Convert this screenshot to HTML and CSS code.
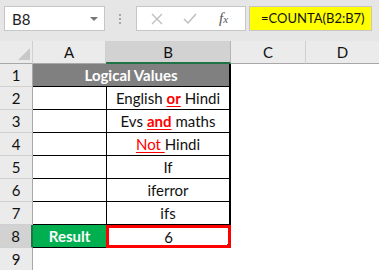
FILE: index.html
```html
<!DOCTYPE html>
<html lang="en">
<head>
  <meta charset="UTF-8" />
  <title>COUNTA</title>
  <link rel="stylesheet" href="styles.css">
</head>
<body>
  <div class="toolbar">
    <div class="name-box">
      <span>B8</span>
      <span class="drop"></span>
    </div>
    <div class="dots"><i></i><i></i><i></i></div>
    <div class="fx-box">
      <svg width="12" height="12" viewBox="0 0 12 12"><path d="M1 1 L11 11 M11 1 L1 11" stroke="#bdbdbd" stroke-width="1.3" fill="none"/></svg>
      <svg width="14" height="12" viewBox="0 0 14 12"><path d="M1 6 L5 10 L13 1" stroke="#bdbdbd" stroke-width="1.5" fill="none"/></svg>
      <span class="fx"><i>f</i><small>x</small></span>
    </div>
    <div class="formula">=COUNTA(B2:B7)</div>
  </div>

  <div class="sheet">
    <div class="corner"><span class="tri"></span></div>
    <div class="col-head">A</div>
    <div class="col-head sel">B</div>
    <div class="col-head">C</div>
    <div class="col-head last">D</div>

    <div class="row-head">1</div>
    <div class="title">Logical Values</div>
    <div class="blank"></div>
    <div class="blank"></div>

    <div class="row-head">2</div>
    <div class="a-cell"></div>
    <div class="b-cell">English <b class="red">or</b> Hindi</div>
    <div class="blank"></div>
    <div class="blank"></div>

    <div class="row-head">3</div>
    <div class="a-cell"></div>
    <div class="b-cell">Evs <b class="red">and</b> maths</div>
    <div class="blank"></div>
    <div class="blank"></div>

    <div class="row-head">4</div>
    <div class="a-cell"></div>
    <div class="b-cell"><span class="red">Not&nbsp;</span>Hindi</div>
    <div class="blank"></div>
    <div class="blank"></div>

    <div class="row-head">5</div>
    <div class="a-cell"></div>
    <div class="b-cell">If</div>
    <div class="blank"></div>
    <div class="blank"></div>

    <div class="row-head">6</div>
    <div class="a-cell"></div>
    <div class="b-cell">iferror</div>
    <div class="blank"></div>
    <div class="blank"></div>

    <div class="row-head">7</div>
    <div class="a-cell"></div>
    <div class="b-cell">ifs</div>
    <div class="blank"></div>
    <div class="blank"></div>

    <div class="row-head sel">8</div>
    <div class="result">Result</div>
    <div class="answer">6<span class="handle"></span></div>
    <div class="blank"></div>
    <div class="blank"></div>

    <div class="row-head">9</div>
    <div class="blank"></div>
    <div class="blank"></div>
    <div class="blank"></div>
    <div class="blank"></div>
  </div>
</body>
</html>
```

FILE: styles.css
```css
body {
  margin: 0;
  font-family: Lato, "Liberation Sans", sans-serif;
  background: #ffffff;
  width: 379px;
  height: 270px;
  overflow: hidden;
}
.toolbar {
  display: flex;
  align-items: center;
  height: 41px;
  background: #e6e6e6;
  padding: 0 0 4px 4px;
  box-sizing: border-box;
}
.toolbar > div {
  flex-shrink: 0;
}
.name-box {
  display: flex;
  align-items: center;
  justify-content: space-between;
  width: 101px;
  height: 25px;
  box-sizing: border-box;
  background: #ffffff;
  border: 1px solid #c6c6c6;
  padding: 0 6px 0 7px;
  font-size: 15px;
  color: #222;
}
.drop {
  width: 0;
  height: 0;
  border-left: 4px solid transparent;
  border-right: 4px solid transparent;
  border-top: 4px solid #777;
}
.dots {
  display: flex;
  flex-direction: column;
  gap: 2px;
  margin: 0 15px 0 14px;
}
.dots i {
  width: 2px;
  height: 2px;
  background: #a8a8a8;
}
.fx-box {
  display: flex;
  align-items: center;
  width: 110px;
  height: 25px;
  box-sizing: border-box;
  background: #ffffff;
  border: 1px solid #c6c6c6;
  padding: 0 12px 0 14px;
  gap: 20px;
}
.fx {
  font-family: "Liberation Serif", serif;
  color: #555;
  font-size: 15px;
  margin-left: 2px;
}
.fx small {
  font-size: 11px;
  font-style: italic;
}
.formula {
  width: 123px;
  margin-left: 3px;
  height: 25px;
  background: #ffff00;
  border: 1px solid #c6c6c6;
  box-sizing: border-box;
  font-size: 13px;
  line-height: 23px;
  padding-left: 11px;
  color: #111;
  white-space: nowrap;
  overflow: hidden;
}
.sheet {
  display: grid;
  grid-template-columns: 33px 73px 125px 75px 73px;
  grid-template-rows: 23px repeat(9, 23px);
  font-size: 15px;
  color: #111;
}
.sheet > div {
  box-sizing: border-box;
  display: flex;
  align-items: center;
  justify-content: center;
}
.corner {
  background: #ebebeb;
  border-right: 1px solid #d0d0d0;
  border-bottom: 1px solid #a8a8a8;
  position: relative;
}
.tri {
  position: absolute;
  right: 2px;
  bottom: 3px;
  width: 0;
  height: 0;
  border-left: 12px solid transparent;
  border-bottom: 12px solid #c8c8c8;
}
.col-head {
  background: #ebebeb;
  border-right: 1px solid #d0d0d0;
  border-bottom: 1px solid #a8a8a8;
}
.col-head.sel {
  background: #d2d2d2;
  border-bottom: 2px solid #217346;
  border-right: 1px solid #b4b4b4;
}
.col-head.last {
  border-right: none;
}
.row-head {
  background: #ebebeb;
  border-right: 1px solid #a8a8a8;
  border-bottom: 1px solid #d0d0d0;
}
.row-head.sel {
  background: #d2d2d2;
  border-right: 2px solid #217346;
}
.title {
  grid-column: span 2;
  background: #808080;
  color: #ffffff;
  font-weight: bold;
  border-bottom: 1px solid #000;
  border-right: 2px solid #000;
}
.blank {
  background: #ffffff;
}
.a-cell {
  border-bottom: 1px solid #000;
}
.b-cell {
  border-left: 1px solid #000;
  border-right: 2px solid #000;
  border-bottom: 1px solid #000;
}
.red {
  color: #ff0000;
  text-decoration: underline;
  text-underline-offset: 2px;
}
b.red {
  margin: 0 4px;
}
.result {
  background: #00b050;
  color: #ffffff;
  font-weight: bold;
  border-bottom: 1px solid #000;
}
.sheet > .answer {
  border: 3px solid #ff0000;
  position: relative;
}
.handle {
  position: absolute;
  right: -4px;
  bottom: -4px;
  width: 5px;
  height: 5px;
  background: #217346;
  z-index: -1;
}
```
